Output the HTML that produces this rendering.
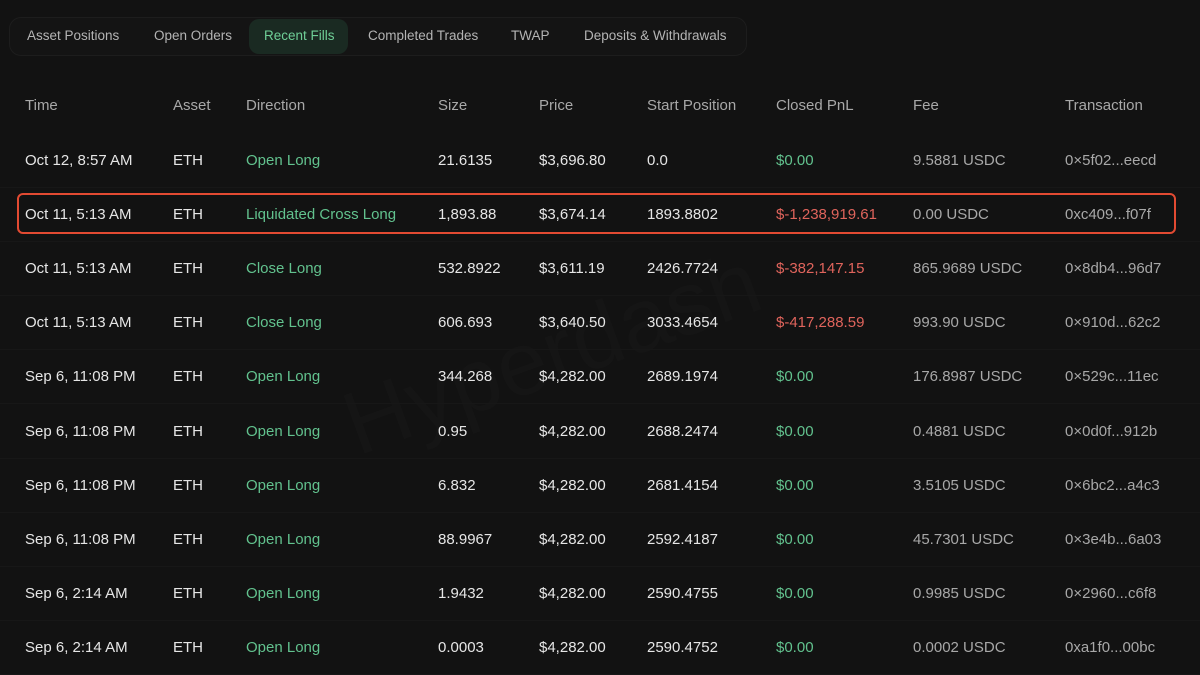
<!DOCTYPE html>
<html><head><style>
body{margin:0;width:1200px;height:675px;background:#121212;font-family:"Liberation Sans",sans-serif;overflow:hidden;position:relative;color:#e6e6e6}
.tabs{position:absolute;left:9px;top:17px;width:736px;height:37px;border:1px solid #1d1d1d;border-radius:12px;background:#141414}
.tab{position:absolute;top:28px;font-size:13.5px;color:#b4b4b4}
.act{position:absolute;left:249px;top:19px;width:99px;height:35px;border-radius:10px;background:#1a2a22}
.c{position:absolute;font-size:15px;white-space:nowrap}
.h{color:#a8a8a8}
.g{color:#62c28e}.r{color:#e0645c}.m{color:#a8a8a8}
.line{position:absolute;left:0;width:1200px;height:1px;background:#171717}
.box{position:absolute;left:17px;top:193px;width:1155px;height:37px;border:2px solid #e24a32;border-radius:6px}
.wm{position:absolute;left:330px;top:380px;font-size:90px;color:#151515;transform:rotate(-20deg);transform-origin:left top}
</style></head><body>
<div class="wm">Hyperdash</div>
<div class="tabs"></div><div class="act"></div>
<div class="tab" style="left:27px">Asset Positions</div>
<div class="tab" style="left:154px">Open Orders</div>
<div class="tab" style="left:264px;color:#6fcf97">Recent Fills</div>
<div class="tab" style="left:368px">Completed Trades</div>
<div class="tab" style="left:511px">TWAP</div>
<div class="tab" style="left:584px">Deposits &amp; Withdrawals</div>
<div id="t"></div>
<div class="box"></div>
<script>
const X=[25,173,246,438,539,647,776,913,1065];
const H=["Time","Asset","Direction","Size","Price","Start Position","Closed PnL","Fee","Transaction"];
const R=[
["Oct 12, 8:57 AM","Open Long","21.6135","$3,696.80","0.0","$0.00","9.5881 USDC","0×5f02...eecd"],
["Oct 11, 5:13 AM","Liquidated Cross Long","1,893.88","$3,674.14","1893.8802","$-1,238,919.61","0.00 USDC","0xc409...f07f"],
["Oct 11, 5:13 AM","Close Long","532.8922","$3,611.19","2426.7724","$-382,147.15","865.9689 USDC","0×8db4...96d7"],
["Oct 11, 5:13 AM","Close Long","606.693","$3,640.50","3033.4654","$-417,288.59","993.90 USDC","0×910d...62c2"],
["Sep 6, 11:08 PM","Open Long","344.268","$4,282.00","2689.1974","$0.00","176.8987 USDC","0×529c...11ec"],
["Sep 6, 11:08 PM","Open Long","0.95","$4,282.00","2688.2474","$0.00","0.4881 USDC","0×0d0f...912b"],
["Sep 6, 11:08 PM","Open Long","6.832","$4,282.00","2681.4154","$0.00","3.5105 USDC","0×6bc2...a4c3"],
["Sep 6, 11:08 PM","Open Long","88.9967","$4,282.00","2592.4187","$0.00","45.7301 USDC","0×3e4b...6a03"],
["Sep 6, 2:14 AM","Open Long","1.9432","$4,282.00","2590.4755","$0.00","0.9985 USDC","0×2960...c6f8"],
["Sep 6, 2:14 AM","Open Long","0.0003","$4,282.00","2590.4752","$0.00","0.0002 USDC","0xa1f0...00bc"]];
let s="";
H.forEach((h,i)=>s+=`<div class="c h" style="left:${X[i]}px;top:97px">${h}</div>`);
R.forEach((r,j)=>{const y=151.5+j*54.2;
 const v=[r[0],"ETH",r[1],r[2],r[3],r[4],r[5],r[6],r[7]];
 v.forEach((t,i)=>{let cl="";if(i==2)cl="g";if(i==6)cl=t.includes("-")?"r":"g";if(i>=7)cl="m";
 s+=`<div class="c ${cl}" style="left:${X[i]}px;top:${y}px">${t}</div>`;});
 s+=`<div class="line" style="top:${y+35}px"></div>`;
});
document.getElementById("t").innerHTML=s;
</script>
</body></html>
